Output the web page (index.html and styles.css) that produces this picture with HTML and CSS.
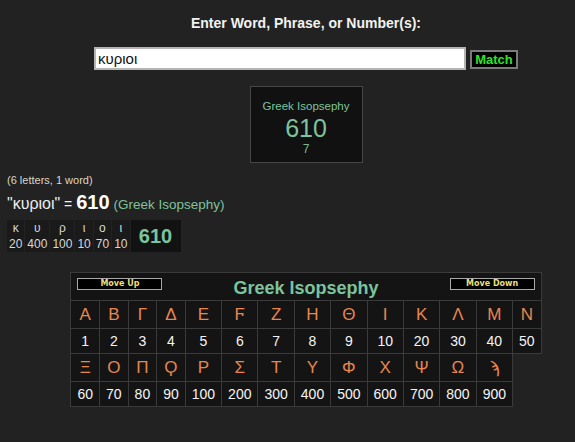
FILE: index.html
```html
<!DOCTYPE html>
<html lang="en">
<head>
<meta charset="utf-8">
<title>Gematria</title>
<link rel="stylesheet" href="styles.css">
</head>
<body>
<div class="center">
  <h1 class="prompt">Enter Word, Phrase, or Number(s):</h1>
  <form class="search">
    <input class="query" type="text" value="κυριοι">
    <button class="match" type="button">Match</button>
  </form>
  <div class="result">
    <div class="r-name">Greek Isopsephy</div>
    <div class="r-val">610</div>
    <div class="r-sub">7</div>
  </div>
</div>

<div class="summary">
  <div class="counts">(6 letters, 1 word)</div>
  <div class="equation"><span class="word">"κυριοι"</span> = <b class="total">610</b> <span class="cipher">(Greek Isopsephy)</span></div>
  <table class="breakdown">
    <tr class="b-letters"><td>κ</td><td>υ</td><td>ρ</td><td>ι</td><td>ο</td><td>ι</td><td class="b-sum" rowspan="2">610</td></tr>
    <tr class="b-nums"><td>20</td><td>400</td><td>100</td><td>10</td><td>70</td><td>10</td></tr>
  </table>
</div>

<div class="center">
  <table class="iso">
    <tr>
      <th colspan="14" class="iso-head">
        <div class="head-bar">
          <button class="mv" type="button">Move Up</button>
          <span class="iso-title">Greek Isopsephy</span>
          <button class="mv" type="button">Move Down</button>
        </div>
      </th>
    </tr>
    <tr class="let"><td>Α</td><td>Β</td><td>Γ</td><td>Δ</td><td>Ε</td><td>Ϝ</td><td>Ζ</td><td>Η</td><td>Θ</td><td>Ι</td><td>Κ</td><td>Λ</td><td>Μ</td><td>Ν</td></tr>
    <tr class="num"><td>1</td><td>2</td><td>3</td><td>4</td><td>5</td><td>6</td><td>7</td><td>8</td><td>9</td><td>10</td><td>20</td><td>30</td><td>40</td><td>50</td></tr>
    <tr class="let"><td>Ξ</td><td>Ο</td><td>Π</td><td>Ϙ</td><td>Ρ</td><td>Σ</td><td>Τ</td><td>Υ</td><td>Φ</td><td>Χ</td><td>Ψ</td><td>Ω</td><td>ϡ</td></tr>
    <tr class="num"><td>60</td><td>70</td><td>80</td><td>90</td><td>100</td><td>200</td><td>300</td><td>400</td><td>500</td><td>600</td><td>700</td><td>800</td><td>900</td></tr>
  </table>
</div>
</body>
</html>
```

FILE: styles.css
```css
html, body {
  margin: 0;
  padding: 0;
  background: #222222;
  color: #eeeeee;
  font-family: "Liberation Sans", Arial, "DejaVu Sans", sans-serif;
}

.center {
  width: 538px;
  margin-left: 37px;
  display: flex;
  flex-direction: column;
  align-items: center;
}

.prompt {
  margin: 14px 0 0;
  font-size: 14px;
  line-height: 18px;
  font-weight: bold;
  color: #f2f2f2;
}

.search {
  margin: 15px 0 0;
  display: flex;
  align-items: center;
  gap: 4px;
}

.query {
  box-sizing: border-box;
  width: 372px;
  height: 23px;
  margin: 0;
  padding: 0 2px;
  border: 2px solid #b4b4b4;
  background: #ffffff;
  color: #111111;
  font-family: "Liberation Sans", Arial, sans-serif;
  font-size: 15px;
  outline: none;
}

.match {
  box-sizing: border-box;
  width: 48px;
  height: 19px;
  margin: 1px 0 0;
  padding: 0;
  border: 2px solid #7a7a7a;
  background: #000000;
  color: #2fe02f;
  font-family: "Liberation Sans", Arial, sans-serif;
  font-size: 13px;
  font-weight: bold;
  line-height: 15px;
}

.result {
  box-sizing: border-box;
  width: 113px;
  height: 77px;
  margin-top: 16px;
  padding-top: 12px;
  border: 1px solid #464646;
  background: #111111;
  text-align: center;
  color: #7cc49e;
}

.r-name {
  font-size: 11.5px;
  line-height: 14px;
}

.r-val {
  font-size: 25px;
  line-height: 28px;
  margin-top: 1px;
}

.r-sub {
  font-size: 12px;
  line-height: 14px;
  color: #78b898;
}

.summary {
  padding-left: 7px;
}

.counts {
  margin-top: 11px;
  font-size: 11px;
  line-height: 13px;
  color: #dcd6c8;
}

.equation {
  margin-top: 6px;
  height: 22px;
  font-size: 14px;
  line-height: 22px;
  color: #eeeeee;
}

.word {
  font-size: 16px;
  line-height: 16px;
}

.total {
  font-size: 20px;
  line-height: 16px;
  color: #ffffff;
}

.cipher {
  font-size: 13.5px;
  line-height: 16px;
  color: #7cc49e;
}

.breakdown {
  margin-top: 5px;
  border-collapse: collapse;
  background: #1a1a1a;
}

.breakdown td {
  padding: 0 2px;
  height: 16px;
  text-align: center;
  font-size: 12px;
  line-height: 16px;
  color: #d8d8d8;
  border-right: 1px solid #222222;
}

.b-letters td {
  font-size: 12px;
}

.breakdown .b-sum {
  width: 50px;
  padding: 0;
  background: #121212;
  color: #7cc49e;
  font-size: 20px;
  font-weight: bold;
  border-right: none;
}

.iso {
  margin-top: 20px;
  border-collapse: collapse;
}

.iso td, .iso th {
  border: 1px solid #3a3a3a;
  background: #141414;
  padding: 0 6px;
  text-align: center;
}

.iso .iso-head {
  padding: 4px 6px 1px;
}

.head-bar {
  display: grid;
  grid-template-columns: 1fr auto 1fr;
  align-items: start;
}

.head-bar .mv:last-child {
  justify-self: end;
}

.mv {
  box-sizing: border-box;
  width: 85px;
  height: 12px;
  margin: 1px 0 0;
  padding: 0;
  border: 1px solid #a8a8a8;
  background: #000000;
  color: #eadf7a;
  font-family: "DejaVu Sans", Verdana, sans-serif;
  font-size: 8px;
  font-weight: bold;
  line-height: 10px;
}

.iso-title {
  font-size: 18px;
  line-height: 22px;
  font-weight: bold;
  color: #7cc49e;
}

.let td {
  height: 27px;
  font-size: 17px;
  color: #e8864e;
}

.num td {
  height: 24px;
  font-size: 14px;
  color: #f4f4f4;
}
```
